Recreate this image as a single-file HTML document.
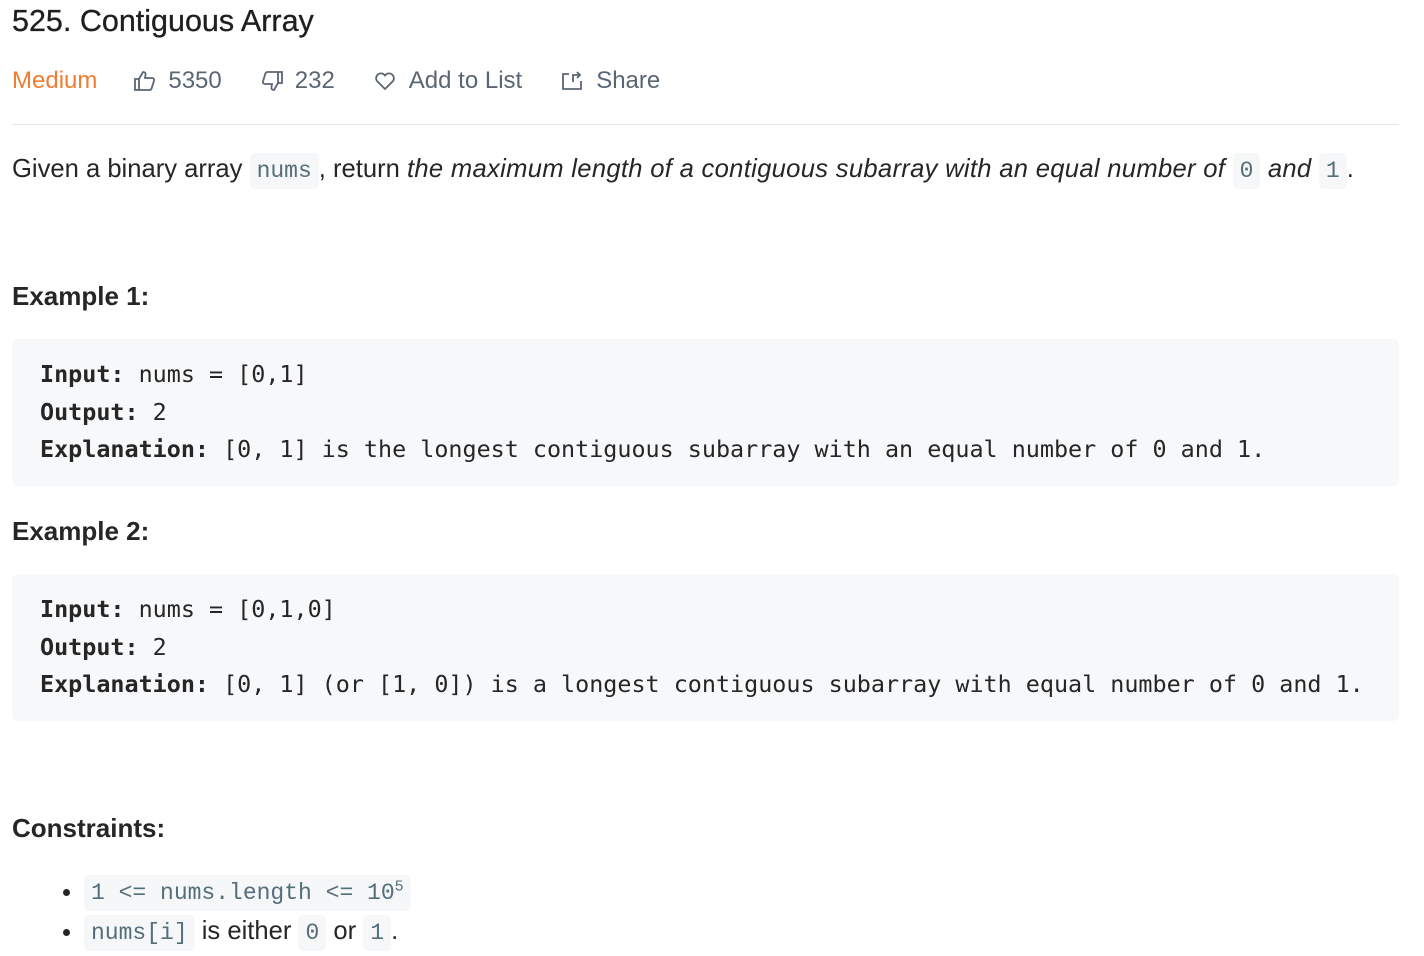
<!DOCTYPE html>
<html><head><meta charset="utf-8"><style>
body{margin:0;background:#fff;width:1424px;height:956px;overflow:hidden;font-family:"Liberation Sans",sans-serif;color:#262626;position:relative}
.a{position:absolute;white-space:nowrap}
.t{font-size:30.5px;left:12px;top:4px;color:#1f1f1f;-webkit-text-stroke:0.3px #1f1f1f}
.bar{top:67px;left:12px;font-size:24px;color:#5a6673;display:flex;align-items:center}
.bar span{display:inline-flex;align-items:center}
hr{position:absolute;top:124px;left:12px;width:1387px;border:0;border-top:1px solid #e8e8e8;margin:0}
.p{font-size:25.6px;left:12px}
.p i{letter-spacing:0.3px}
code{font-family:"Liberation Mono",monospace;font-size:23px;color:#546e7a;background:#f5f7f9;border-radius:5px;padding:5px 7px;letter-spacing:0}
.h{font-size:26px;font-weight:bold;left:12px}
pre{position:absolute;left:12px;width:1359px;margin:0;background:#f7f8fa;border-radius:6px;padding:17px 0 17px 28px;font-family:"DejaVu Sans Mono",monospace;font-size:23.4px;line-height:37.5px;color:#262626}
pre b{font-weight:bold}
ul{position:absolute;left:12px;top:868px;margin:0;padding-left:72px;font-size:25.6px;line-height:38px}
</style></head><body>
<div class="a t">525. Contiguous Array</div>
<div class="a bar">
<span style="color:#ef7d31;margin-right:38px">Medium</span>
<span style="margin-right:38px"><svg width="24" height="24" viewBox="0 0 24 24" fill="none" stroke="#5a6673" stroke-width="1.8" style="margin-right:11px;margin-left:-2px"><path d="M2 10h4v11H2zM6 10l4-7c2 0 3 1 2.5 3L12 9h7c1.5 0 2.5 1.3 2 2.7l-2.3 7.5c-.3 1-1.2 1.8-2.3 1.8H6"/></svg>5350</span>
<span style="margin-right:38px"><svg width="24" height="24" viewBox="0 0 24 24" fill="none" stroke="#5a6673" stroke-width="1.8" style="margin-right:11px"><path d="M22 14h-4V3h4zM18 14l-4 7c-2 0-3-1-2.5-3L12 15H5c-1.5 0-2.5-1.3-2-2.7l2.3-7.5C5.6 3.8 6.5 3 7.6 3H18"/></svg>232</span>
<span style="margin-right:38px"><svg width="24" height="24" viewBox="0 0 24 24" fill="none" stroke="#5a6673" stroke-width="1.8" style="margin-right:12px"><path d="M12 20l-8-8a4.8 4.8 0 0 1 8-5.5A4.8 4.8 0 0 1 20 12z"/></svg>Add to List</span>
<span><svg width="24" height="24" viewBox="0 0 24 24" fill="none" stroke="#5a6673" stroke-width="1.8" style="margin-right:12px"><path d="M9 5H3v15h18v-8M13 13V6h7M17 3l3 3-3 3"/></svg>Share</span>
</div>
<hr>
<div class="a p" style="top:155px">Given a binary array <code>nums</code>, return <i>the maximum length of a contiguous subarray with an equal number of </i><code>0</code><i> and </i><code>1</code>.</div>
<div class="a h" style="top:281px">Example 1:</div>
<pre style="top:339px"><b>Input:</b> nums = [0,1]
<b>Output:</b> 2
<b>Explanation:</b> [0, 1] is the longest contiguous subarray with an equal number of 0 and 1.</pre>
<div class="a h" style="top:516px">Example 2:</div>
<pre style="top:574px"><b>Input:</b> nums = [0,1,0]
<b>Output:</b> 2
<b>Explanation:</b> [0, 1] (or [1, 0]) is a longest contiguous subarray with equal number of 0 and 1.</pre>
<div class="a h" style="top:813px">Constraints:</div>
<ul>
<li><code>1 &lt;= nums.length &lt;= 10<sup style="font-size:15px">5</sup></code></li>
<li><code>nums[i]</code> is either <code>0</code> or <code>1</code>.</li>
</ul>
</body></html>
